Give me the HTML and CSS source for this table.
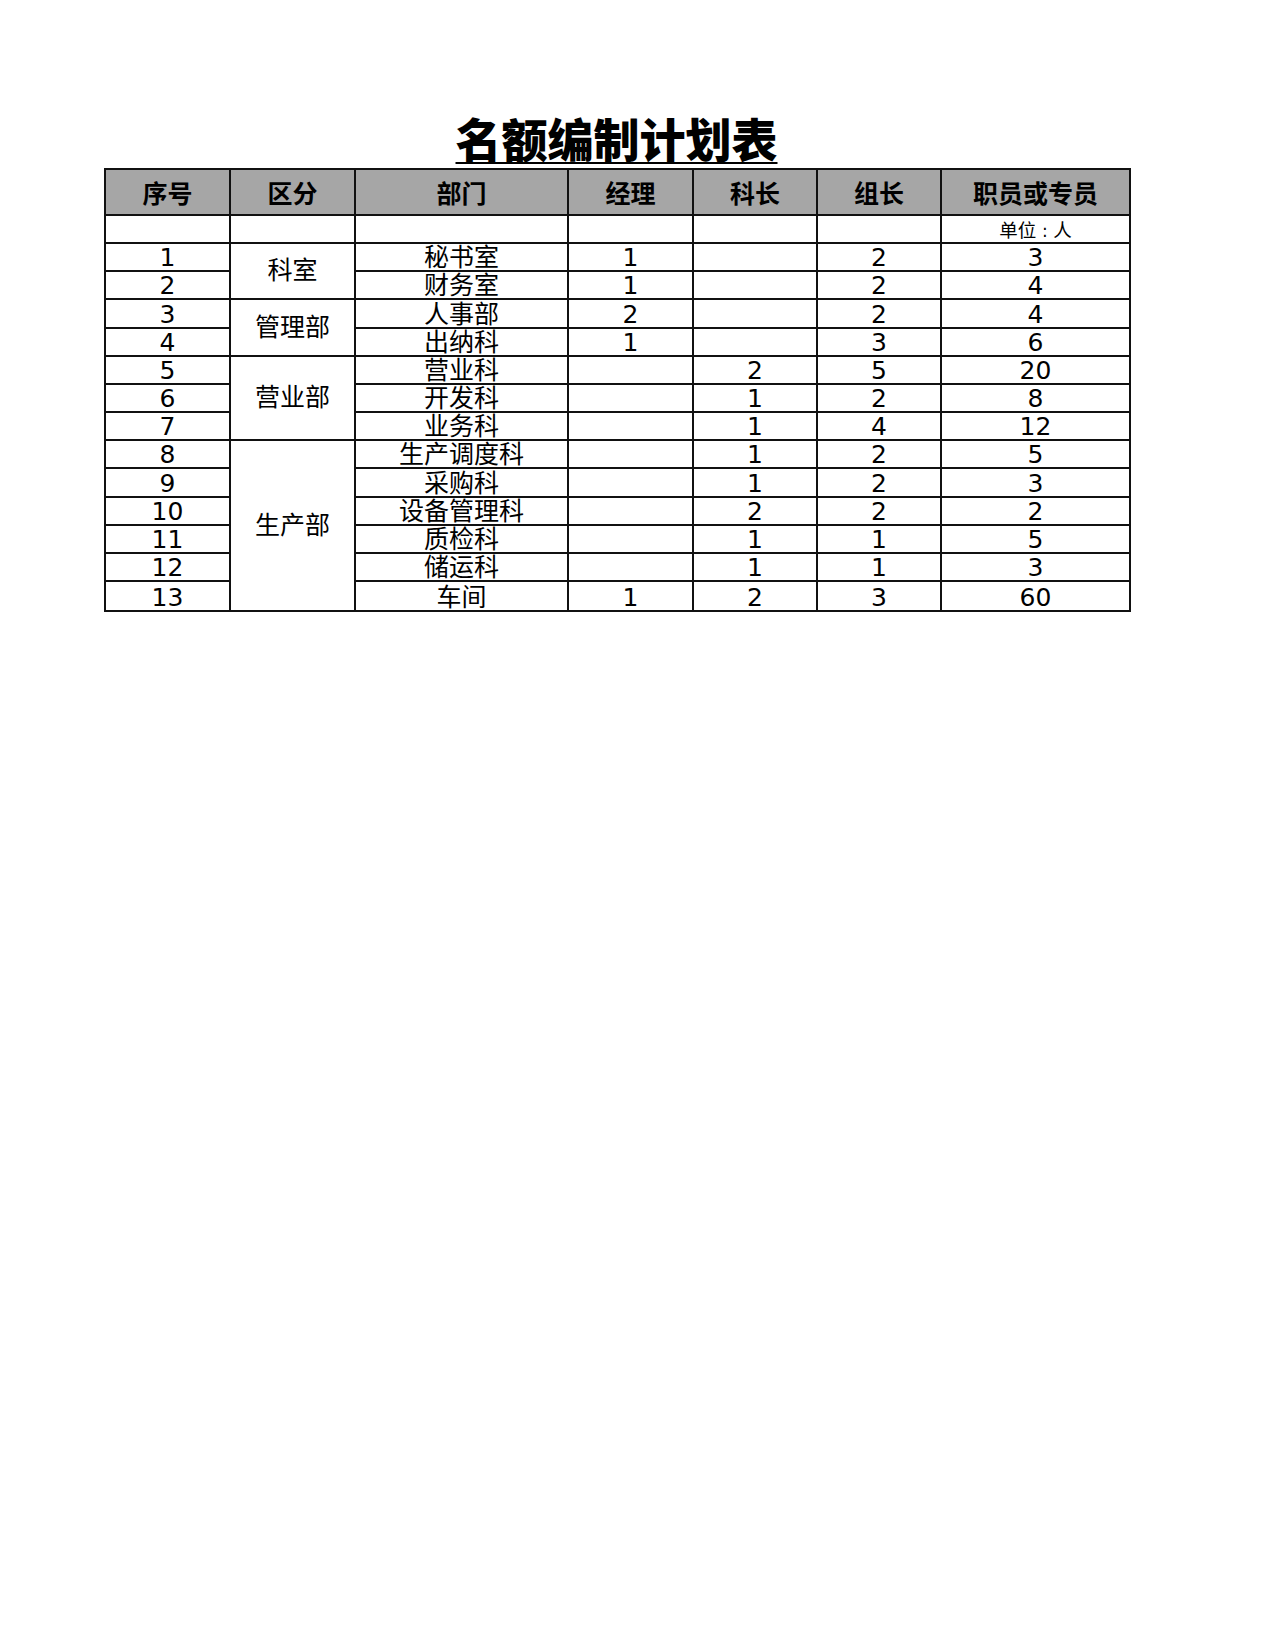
FILE: index.html
```html
<!DOCTYPE html>
<html lang="zh">
<head>
<meta charset="utf-8">
<title>名额编制计划表</title>
<link rel="stylesheet" href="styles.css">
</head>
<body>
<div class="page">
  <div class="title-wrap"><h1 class="title">名额编制计划表</h1></div>
  <table class="plan">
    <colgroup>
      <col class="c-no"><col class="c-area"><col class="c-dept"><col class="c-mgr"><col class="c-chief"><col class="c-leader"><col class="c-staff">
    </colgroup>
    <thead>
      <tr class="head">
        <th>序号</th><th>区分</th><th>部门</th><th>经理</th><th>科长</th><th>组长</th><th>职员或专员</th>
      </tr>
    </thead>
    <tbody>
      <tr class="unit"><td></td><td></td><td></td><td></td><td></td><td></td><td class="unit-cell">单位<span class="colon">:</span>人</td></tr>
      <tr><td>1</td><td class="group" rowspan="2">科室</td><td>秘书室</td><td>1</td><td></td><td>2</td><td>3</td></tr>
      <tr><td>2</td><td>财务室</td><td>1</td><td></td><td>2</td><td>4</td></tr>
      <tr><td>3</td><td class="group" rowspan="2">管理部</td><td>人事部</td><td>2</td><td></td><td>2</td><td>4</td></tr>
      <tr><td>4</td><td>出纳科</td><td>1</td><td></td><td>3</td><td>6</td></tr>
      <tr><td>5</td><td class="group" rowspan="3">营业部</td><td>营业科</td><td></td><td>2</td><td>5</td><td>20</td></tr>
      <tr><td>6</td><td>开发科</td><td></td><td>1</td><td>2</td><td>8</td></tr>
      <tr><td>7</td><td>业务科</td><td></td><td>1</td><td>4</td><td>12</td></tr>
      <tr><td>8</td><td class="group" rowspan="6">生产部</td><td>生产调度科</td><td></td><td>1</td><td>2</td><td>5</td></tr>
      <tr><td>9</td><td>采购科</td><td></td><td>1</td><td>2</td><td>3</td></tr>
      <tr><td>10</td><td>设备管理科</td><td></td><td>2</td><td>2</td><td>2</td></tr>
      <tr><td>11</td><td>质检科</td><td></td><td>1</td><td>1</td><td>5</td></tr>
      <tr><td>12</td><td>储运科</td><td></td><td>1</td><td>1</td><td>3</td></tr>
      <tr class="last"><td>13</td><td>车间</td><td>1</td><td>2</td><td>3</td><td>60</td></tr>
    </tbody>
  </table>
</div>
</body>
</html>
```

FILE: styles.css
```css
html, body {
  margin: 0;
  padding: 0;
  background: #ffffff;
}

.page {
  padding-top: 113px;
  padding-left: 104px;
  font-family: "DejaVu Sans", "Noto Sans CJK SC", sans-serif;
  color: #000;
}

.title-wrap {
  width: 1025px;
  text-align: center;
  margin-bottom: 7px;
}

.title {
  margin: 0;
  font-family: "Noto Sans CJK SC", sans-serif;
  font-size: 46px;
  font-weight: 900;
  line-height: 48px;
  height: 48px;
  text-decoration: underline;
  text-decoration-thickness: 2px;
  text-underline-offset: 5px;
}

.plan {
  border-collapse: collapse;
  table-layout: fixed;
  width: 1025px;
}

.c-no { width: 125px; }
.c-area { width: 125px; }
.c-dept { width: 213px; }
.c-mgr { width: 125px; }
.c-chief { width: 124px; }
.c-leader { width: 124px; }
.c-staff { width: 189px; }

.plan th,
.plan td {
  border: 2px solid #111;
  padding: 0;
  text-align: center;
  white-space: nowrap;
  overflow: hidden;
}

.head th {
  height: 44px;
  background: #a6a6a6;
  font-family: "Noto Sans CJK SC", sans-serif;
  font-weight: 700;
  font-size: 25px;
  line-height: 26px;
  vertical-align: middle;
}

.plan td {
  height: 24.18px;
  font-size: 25px;
  line-height: 20px;
  padding-bottom: 2px;
  vertical-align: bottom;
}

.plan tr.unit td {
  height: 24px;
  padding-bottom: 0;
  padding-top: 2px;
}

.plan td.unit-cell {
  font-family: "Noto Sans CJK SC", sans-serif;
  font-size: 18.5px;
  line-height: 20px;
  vertical-align: middle;
}

.colon {
  display: inline-block;
  width: 1em;
  text-align: center;
  font-family: "DejaVu Sans", sans-serif;
  font-size: 17px;
}

.plan td.group {
  vertical-align: middle;
  padding-bottom: 0;
}

.plan tr.last td {
  height: 26px;
}
```
